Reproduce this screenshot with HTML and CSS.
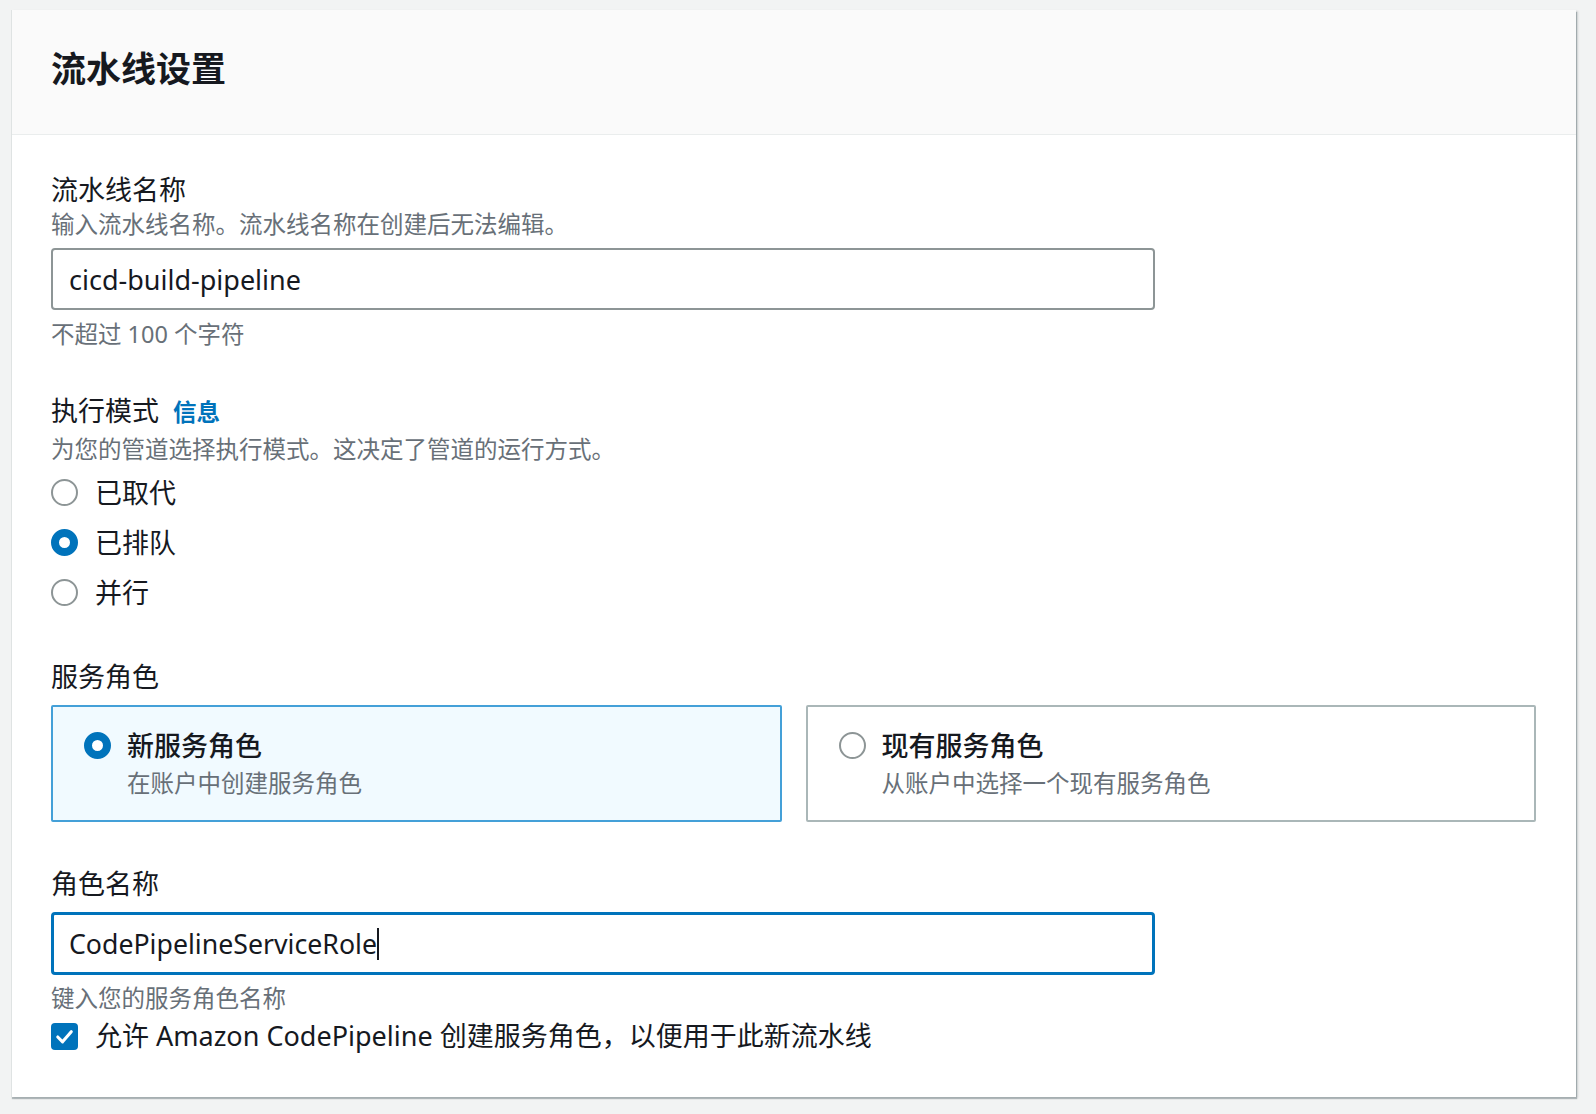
FILE: index.html
```html
<!DOCTYPE html>
<html lang="zh-CN">
<head>
<meta charset="utf-8">
<title>流水线设置</title>
<link rel="stylesheet" href="styles.css">
</head>
<body>
<div class="page">
  <section class="card">
    <header class="card-header">
      <h2 class="card-title">流水线设置</h2>
    </header>
    <div class="card-body">
      <div class="field field-name">
        <div class="label">流水线名称</div>
        <div class="desc">输入流水线名称。流水线名称在创建后无法编辑。</div>
        <div class="input">cicd-build-pipeline</div>
        <div class="hint hint-after">不超过 100 个字符</div>
      </div>

      <div class="field field-mode">
        <div class="label">执行模式 <span class="info">信息</span></div>
        <div class="desc desc-mode">为您的管道选择执行模式。这决定了管道的运行方式。</div>
        <div class="radio-group">
          <div class="radio-row"><span class="radio"></span><span class="radio-label">已取代</span></div>
          <div class="radio-row"><span class="radio checked"></span><span class="radio-label">已排队</span></div>
          <div class="radio-row"><span class="radio"></span><span class="radio-label">并行</span></div>
        </div>
      </div>

      <div class="field field-role">
        <div class="label">服务角色</div>
        <div class="tiles">
          <div class="tile selected">
            <span class="radio checked"></span>
            <div class="tile-text">
              <div class="tile-title">新服务角色</div>
              <div class="tile-desc">在账户中创建服务角色</div>
            </div>
          </div>
          <div class="tile">
            <span class="radio"></span>
            <div class="tile-text">
              <div class="tile-title">现有服务角色</div>
              <div class="tile-desc">从账户中选择一个现有服务角色</div>
            </div>
          </div>
        </div>
      </div>

      <div class="field field-rolename">
        <div class="label">角色名称</div>
        <div class="input focused">CodePipelineServiceRole<span class="caret"></span></div>
        <div class="hint hint-after">键入您的服务角色名称</div>
        <div class="check-row">
          <span class="checkbox">
            <svg viewBox="0 0 28 28" width="27" height="27"><path d="M7 14.5 L12 19.5 L21 9" fill="none" stroke="#ffffff" stroke-width="3.2" stroke-linecap="round" stroke-linejoin="round"/></svg>
          </span>
          <span class="check-label">允许 Amazon CodePipeline 创建服务角色，以便用于此新流水线</span>
        </div>
      </div>
    </div>
  </section>
</div>
</body>
</html>
```

FILE: styles.css
```css
* { box-sizing: border-box; }

html, body {
  margin: 0;
  padding: 0;
}

body {
  background: #f2f3f3;
  font-family: "Noto Sans", "Noto Sans CJK SC", sans-serif;
  color: #16191f;
  width: 1596px;
  height: 1114px;
  overflow: hidden;
}

.page {
  padding: 10px 0 0 11px;
}

.card {
  width: 1565px;
  height: 1087px;
  background: #ffffff;
  border-left: 1px solid #dfe3e3;
  box-shadow: 1px 2px 1px 0 rgba(0, 28, 36, 0.25), 2px 1px 2px 0 rgba(0, 28, 36, 0.12);
}

.card-header {
  height: 125px;
  background: #fafafa;
  border-bottom: 1px solid #eaeded;
  display: flex;
  align-items: center;
  padding: 0 0 10px 39px;
}

.card-title {
  margin: 0;
  font-family: "Noto Sans CJK SC", sans-serif;
  font-size: 35px;
  font-weight: 700;
  line-height: 44px;
  color: #16191f;
}

.card-body {
  padding: 36px 0 0 39px;
}

.label {
  font-family: "Noto Sans CJK SC", sans-serif;
  font-size: 27px;
  line-height: 36px;
  color: #16191f;
}

.info {
  color: #0073bb;
  font-weight: 700;
  font-size: 23.5px;
  margin-left: 8px;
}

.desc {
  font-family: "Noto Sans CJK SC", sans-serif;
  font-size: 23.5px;
  line-height: 32px;
  color: #687078;
}

.desc-mode {
  margin-top: 3px;
}

.hint {
  font-family: "Noto Sans", "Noto Sans CJK SC", sans-serif;
  font-size: 23.5px;
  line-height: 32px;
  color: #687078;
}

.hint-after {
  margin-top: 8px;
}

.input {
  margin-top: 9px;
  width: 1104px;
  height: 62px;
  border: 2px solid #8d9596;
  border-radius: 4px;
  padding: 0 16px;
  display: flex;
  align-items: center;
  font-family: "Noto Sans", sans-serif;
  font-size: 27px;
  color: #16191f;
}

.input.focused {
  border: 3px solid #0073bb;
  padding-left: 15px;
  margin-top: 11px;
  height: 63px;
  font-size: 26.7px;
}

.caret {
  display: inline-block;
  width: 1.5px;
  height: 32px;
  background: #16191f;
}

.field-mode {
  margin-top: 42px;
}

.radio-group {
  margin-top: 3px;
}

.radio-row {
  height: 50px;
  display: flex;
  align-items: center;
  gap: 17px;
}

.radio {
  width: 27px;
  height: 27px;
  border-radius: 50%;
  border: 2px solid #8d9596;
  background: #ffffff;
  flex: none;
  display: inline-block;
}

.radio.checked {
  border: 8px solid #0073bb;
}

.radio-label {
  font-family: "Noto Sans CJK SC", sans-serif;
  font-size: 27px;
  line-height: 36px;
}

.field-role {
  margin-top: 41px;
}

.tiles {
  margin-top: 11px;
  display: flex;
  gap: 24px;
  width: 1485px;
}

.tile {
  flex: 1;
  height: 117px;
  border: 2px solid #aab7b8;
  border-radius: 2px;
  background: #ffffff;
  display: flex;
  align-items: flex-start;
  padding: 23px 0 0 31px;
  gap: 16px;
}

.tile.selected {
  border-color: #44a0d8;
  background: #f1faff;
}

.tile .radio {
  margin-top: 2px;
}

.tile-title {
  font-family: "Noto Sans CJK SC", sans-serif;
  font-size: 27px;
  line-height: 36px;
  font-weight: 500;
  margin-top: -3px;
}

.tile-desc {
  font-family: "Noto Sans CJK SC", sans-serif;
  font-size: 23.5px;
  line-height: 32px;
  color: #687078;
  margin-top: 3px;
}

.field-rolename {
  margin-top: 43px;
}

.field-rolename .hint-after {
  margin-top: 7px;
}

.check-row {
  margin-top: 4px;
  height: 36px;
  display: flex;
  align-items: center;
  gap: 17px;
}

.checkbox {
  width: 27px;
  height: 27px;
  border-radius: 4px;
  background: #0073bb;
  display: inline-flex;
  flex: none;
}

.check-label {
  font-family: "Noto Sans", "Noto Sans CJK SC", sans-serif;
  font-size: 27px;
  line-height: 36px;
  color: #16191f;
}
```
